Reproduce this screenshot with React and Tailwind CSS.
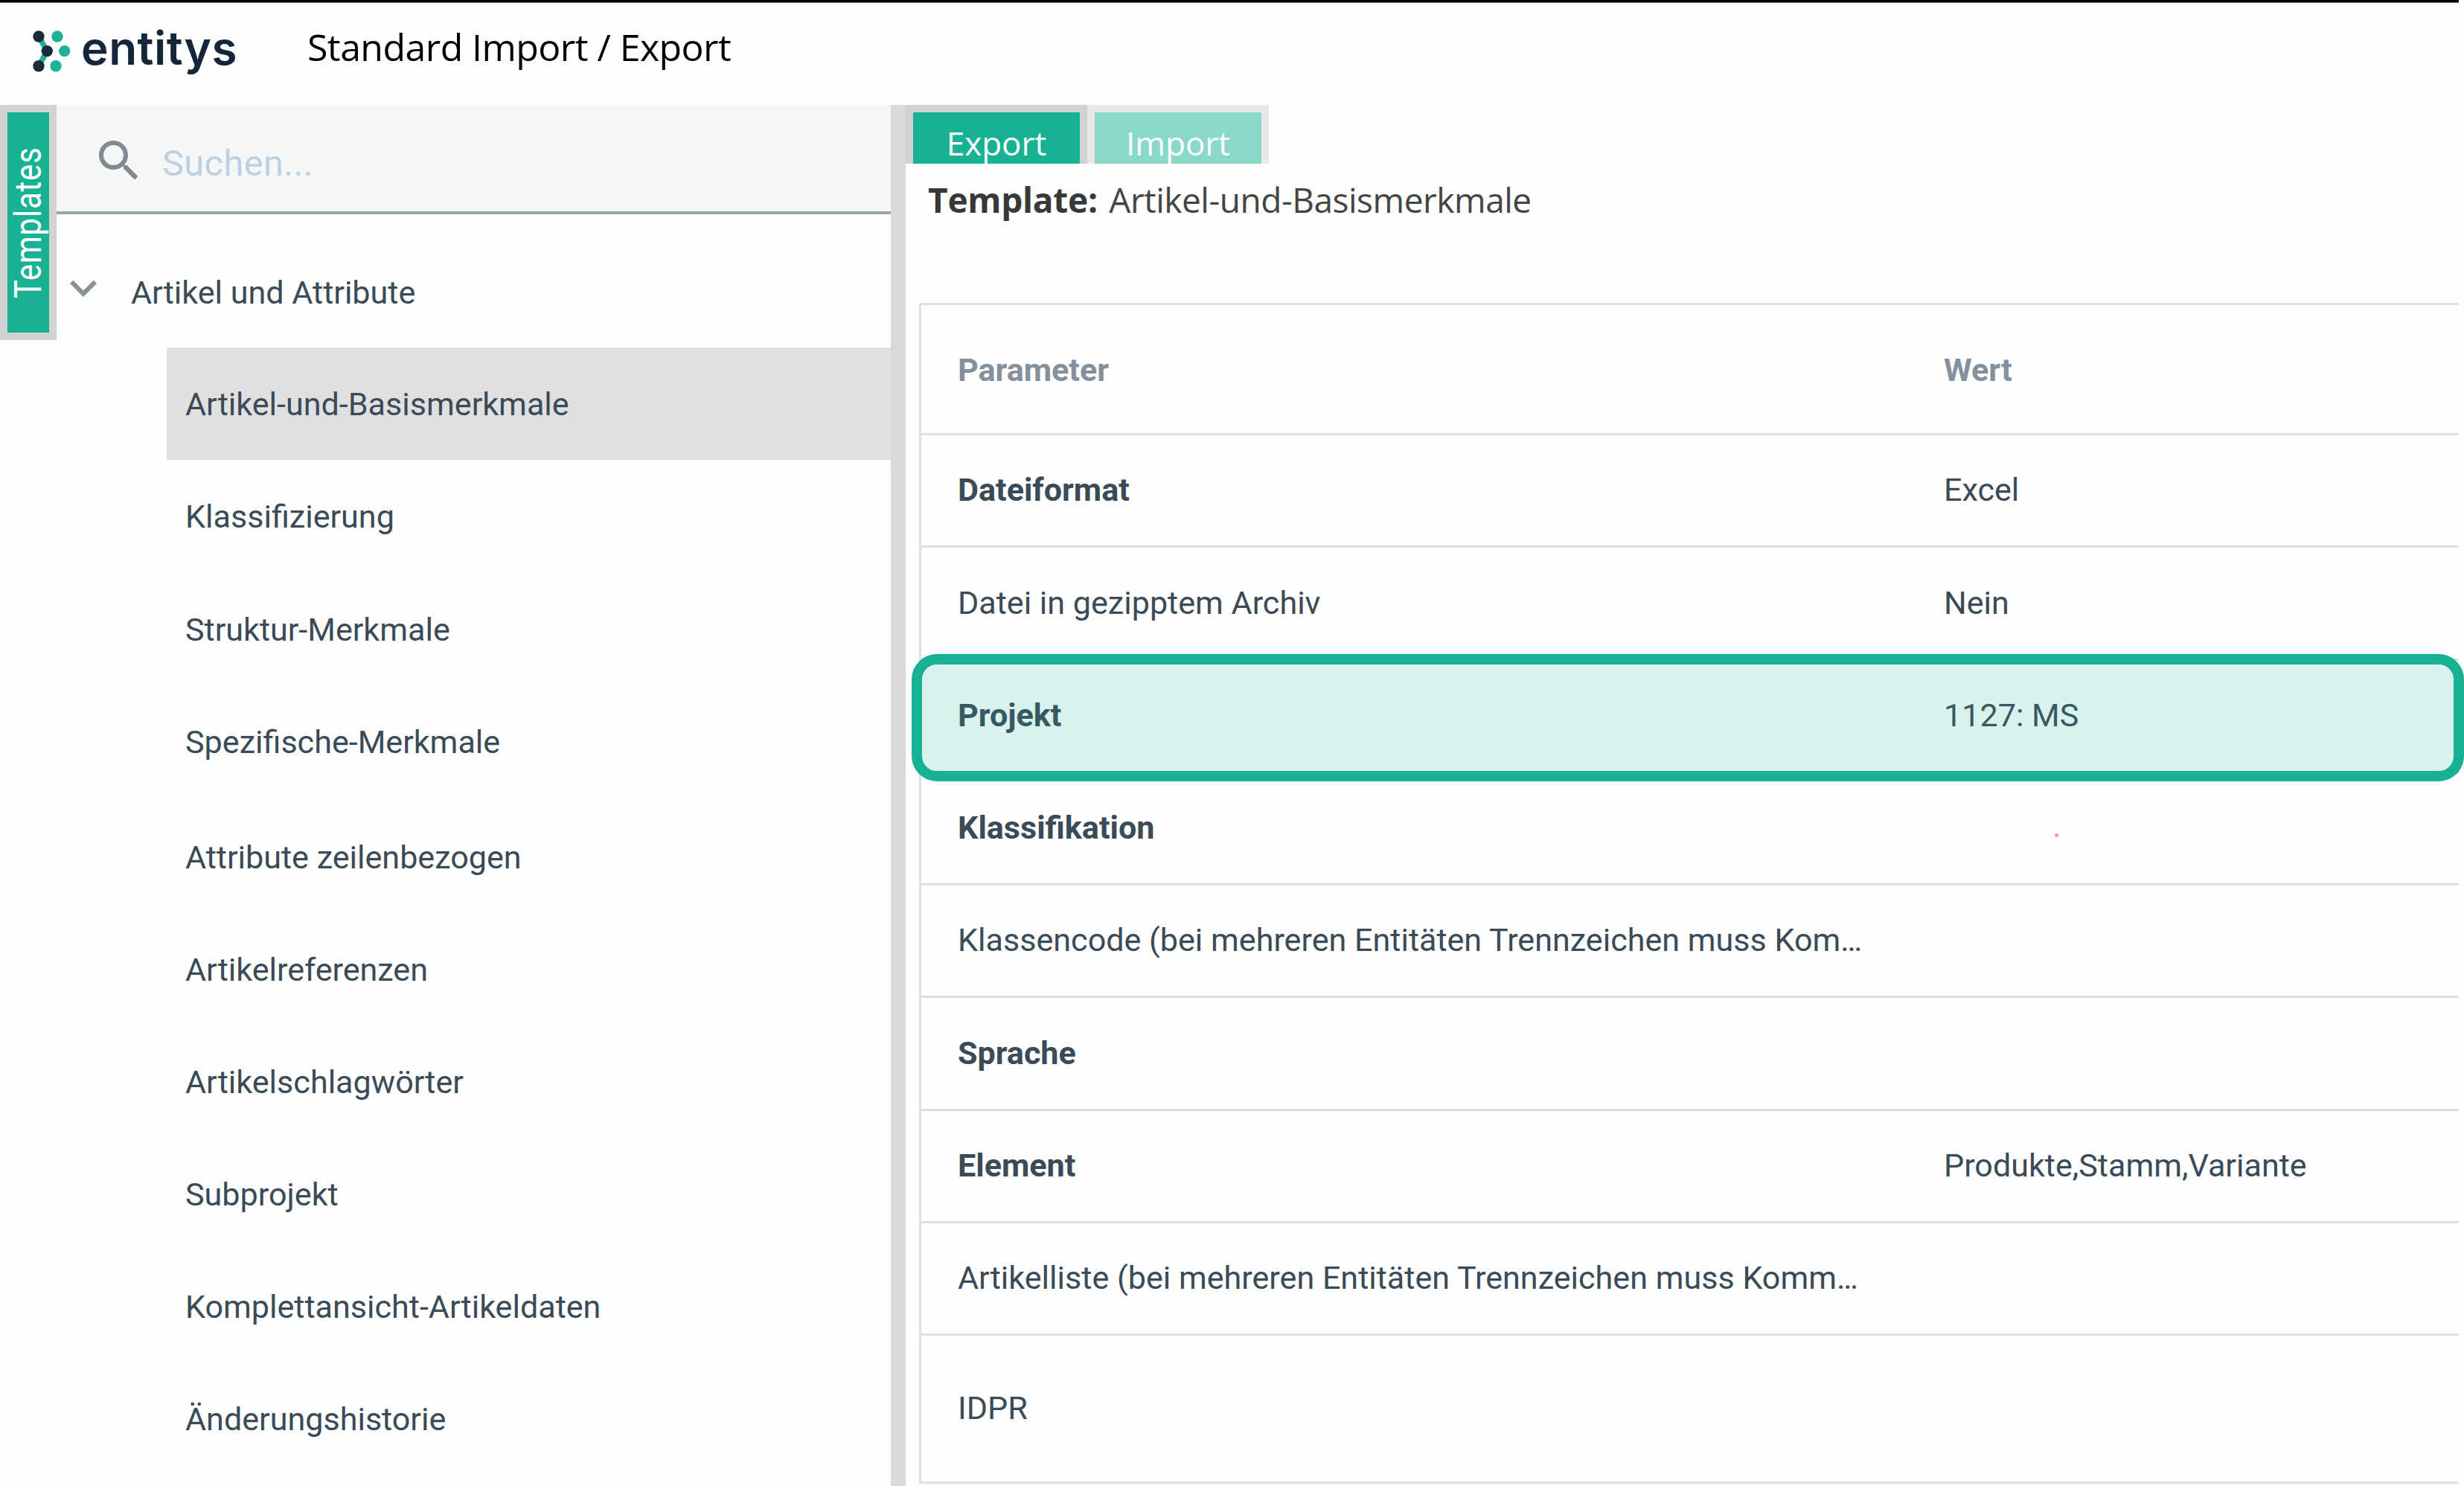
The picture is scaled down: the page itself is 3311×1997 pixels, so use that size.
const templates = [
  'Artikel-und-Basismerkmale',
  'Klassifizierung',
  'Struktur-Merkmale',
  'Spezifische-Merkmale',
  'Attribute zeilenbezogen',
  'Artikelreferenzen',
  'Artikelschlagwörter',
  'Subprojekt',
  'Komplettansicht-Artikeldaten',
  'Änderungshistorie',
];

const parameters = [
  { name: 'Dateiformat', value: 'Excel', required: true },
  { name: 'Datei in gezipptem Archiv', value: 'Nein' },
  { name: 'Projekt', value: '1127: MS', required: true, highlighted: true },
  { name: 'Klassifikation', required: true, marker: true },
  { name: 'Klassencode (bei mehreren Entitäten Trennzeichen muss Kom…' },
  { name: 'Sprache', required: true },
  { name: 'Element', value: 'Produkte,Stamm,Variante', required: true },
  { name: 'Artikelliste (bei mehreren Entitäten Trennzeichen muss Komm…' },
  { name: 'IDPR', tall: true },
];

function LogoMark() {
  return (
    <svg className="ml-[44px] mt-[37px] h-[60px] w-[51px] shrink-0" viewBox="0 0 51 60">
      <path d="M8 8 L19.3 27.6 L8 47.7" fill="none" stroke="#1fb396" strokeWidth="7.5" />
      <g fill="#1b2b3c">
        <circle cx="8" cy="8" r="7.7" />
        <circle cx="19.3" cy="27.6" r="7.7" />
        <circle cx="8" cy="47.7" r="7.7" />
      </g>
      <g fill="#1fb396">
        <circle cx="33" cy="8" r="7.7" />
        <circle cx="42.7" cy="27.6" r="7.7" />
        <circle cx="31" cy="47.7" r="7.7" />
      </g>
    </svg>
  );
}

function Header() {
  return (
    <header className="flex h-[137px] items-start">
      <LogoMark />
      <span className="ml-[14px] mt-[21px] w-[210px] text-[62px] leading-[80px] font-semibold tracking-[0.5px] text-[#14273a] [font-family:Inter,sans-serif]">
        entitys
      </span>
      <h1 className="ml-[94px] mt-[19px] text-[50px] leading-[80px] tracking-[-0.55px] whitespace-nowrap text-black [font-family:'Open_Sans',sans-serif]">
        Standard Import / Export
      </h1>
    </header>
  );
}

function TemplatesTab() {
  return (
    <div className="flex h-[316px] w-[76px] shrink-0 bg-[#d2d2d2] py-[10px] pr-[10px] pl-[10px]">
      <div className="flex w-full justify-center overflow-hidden bg-[#17b294]">
        <span className="mt-[46px] h-[204px] w-[56px] scale-x-[1.19] rotate-180 text-[42px] leading-[56px] tracking-[0.8px] whitespace-nowrap text-white [writing-mode:vertical-rl]">
          Templates
        </span>
      </div>
    </div>
  );
}

function Sidebar() {
  return (
    <aside className="w-[1121px] shrink-0">
      <div className="flex h-[147px] border-b-4 border-[#9ba5ac] bg-[#f5f7f6]">
        <svg className="mt-[39px] ml-[48px] h-[72px] w-[72px]" viewBox="0 0 24 24" fill="#7f8a93">
          <path d="M15.5 14h-.79l-.28-.27C15.41 12.59 16 11.11 16 9.5 16 5.91 13.09 3 9.5 3S3 5.91 3 9.5 5.91 16 9.5 16c1.61 0 3.09-.59 4.23-1.57l.27.28v.79l5 4.99L20.49 19l-4.99-5zm-6 0C7.01 14 5 11.99 5 9.5S7.01 5 9.5 5 14 7.01 14 9.5 11.99 14 9.5 14z" />
        </svg>
        <span className="mt-[39px] ml-[22px] text-[49px] leading-[80px] tracking-[0.25px] text-[#bdd0e3]">Suchen...</span>
      </div>
      <div className="flex h-[179px] items-start">
        <svg className="mt-[63px] h-[72px] w-[72px]" viewBox="0 0 24 24" fill="#84909b">
          <path d="M16.59 8.59 12 13.17 7.41 8.59 6 10l6 6 6-6z" />
        </svg>
        <span className="mt-[66px] ml-[28px] leading-[80px]">Artikel und Attribute</span>
      </div>
      <ul className="ml-[148px]">
        {templates.map((name, i) => (
          <li
            key={name}
            className={
              'flex h-[151.2px] items-center pt-[4px] pl-[25px] whitespace-nowrap ' +
              (i === 0 ? 'bg-[#e0e0e0] ' : '') +
              (i === 4 ? 'mt-[3.5px]' : '')
            }
          >
            {name}
          </li>
        ))}
      </ul>
    </aside>
  );
}

function Tabs() {
  return (
    <div className="flex h-[79px] overflow-hidden text-[44px] leading-[60px] text-white [font-family:'Open_Sans',sans-serif]">
      <div className="w-[244px] bg-[#d2d2d2] px-[10px] pt-[10px]">
        <div className="h-[90px] bg-[#17b294] pt-[11px] text-center">Export</div>
      </div>
      <div className="w-[244px] bg-[#e8e8e8] px-[10px] pt-[10px]">
        <div className="h-[90px] bg-[#8ad8c9] pt-[11px] text-center">Import</div>
      </div>
    </div>
  );
}

function Row({ row }) {
  return (
    <div
      className={
        'relative flex items-center border-b-[3px] border-[#e0e0e0] pt-[1px] pl-[49px] whitespace-nowrap ' +
        (row.tall ? 'h-[199px]' : 'h-[151.25px]')
      }
    >
      <span className={'w-[1325px] ' + (row.required ? 'font-bold' : '')}>{row.name}</span>
      <span>{row.value}</span>
      {row.marker && <span className="mt-[19px] ml-[149px] h-[5px] w-[5px] rounded-full bg-[#f29a9a]" />}
      {row.highlighted && (
        <div className="absolute -top-[8.5px] -right-[7px] -left-[13px] z-10 h-[171px] rounded-[34px] border-[14px] border-[#17b294] bg-[#17b294]/16 bg-clip-padding" />
      )}
    </div>
  );
}

function ParameterTable() {
  return (
    <div className="mt-[91px] mr-[7px] ml-[18px] border-t-[3px] border-l-[3px] border-[#e0e0e0]">
      <div className="flex h-[175px] items-center border-b-[3px] border-[#e0e0e0] pt-[4px] pl-[49px] font-bold text-[#84909b]">
        <span className="w-[1325px]">Parameter</span>
        <span>Wert</span>
      </div>
      {parameters.map((row) => (
        <Row key={row.name} row={row} />
      ))}
    </div>
  );
}

export default function App() {
  return (
    <div className="h-[1997px] w-[3311px] overflow-hidden bg-[#fefefe] text-[43.1px] text-[#3b4a57] [font-family:Roboto,sans-serif]">
      <div className="mr-[7px] h-[4px] border-b border-[#777777] bg-black" />
      <Header />
      <div className="flex h-[1856px]">
        <TemplatesTab />
        <Sidebar />
        <div className="w-[20px] shrink-0 bg-[#d9d9d9]" />
        <main className="min-w-0 flex-1">
          <Tabs />
          <p className="mt-[16px] ml-[30px] h-[80px] text-[46px] leading-[64px] tracking-[-0.48px] whitespace-nowrap text-[#444444] [font-family:'Open_Sans',sans-serif]">
            <b className="mr-[4px] tracking-[-0.26px] text-[#383838]">Template:</b> Artikel-und-Basismerkmale
          </p>
          <ParameterTable />
        </main>
      </div>
    </div>
  );
}
